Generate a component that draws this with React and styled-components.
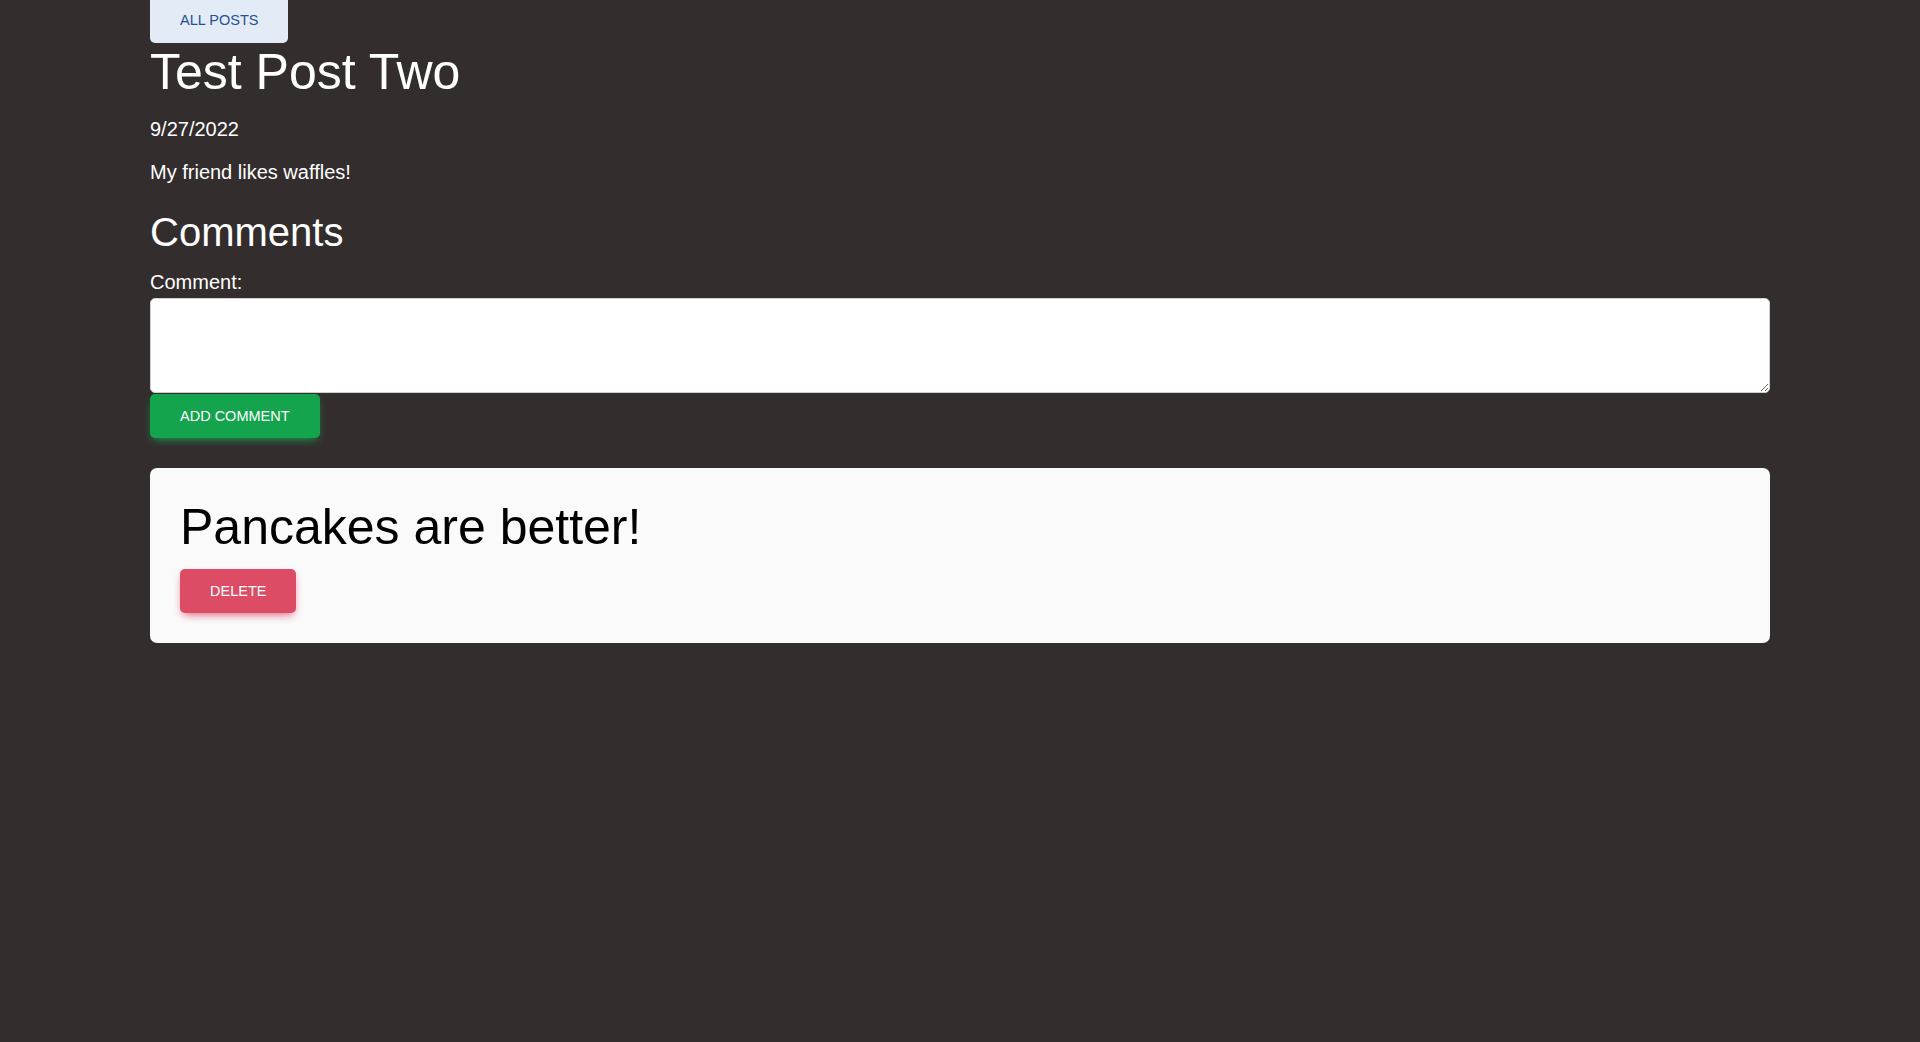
import React from 'react';
import styled, { createGlobalStyle } from 'styled-components';

const GlobalStyle = createGlobalStyle`
  html, body {
    margin: 0;
    padding: 0;
    background: #332d2d;
  }

  body {
    font-family: "Liberation Sans", Arial, sans-serif;
    color: #ffffff;
  }
`;

const Page = styled.main`
  width: 1620px;
  margin: 0 auto;
  display: flex;
  flex-direction: column;
  align-items: flex-start;
`;

const Button = styled.button`
  height: 44px;
  padding: 0 30px;
  border: none;
  border-radius: 5px;
  font-family: "Liberation Sans", Arial, sans-serif;
  font-size: 14.5px;
  text-transform: uppercase;
  cursor: pointer;
  color: ${props => props.$color || '#ffffff'};
  background-color: ${props => props.$bg};
  box-shadow: ${props => props.$glow ? `0 4px 10px -3px ${props.$bg}` : 'none'};
`;

const BackButton = styled(Button)`
  height: 47px;
  margin-top: -4px;
`;

const Title = styled.h1`
  margin: 0;
  font-size: 50px;
  font-weight: 400;
  line-height: normal;
`;

const Text = styled.p`
  margin: ${props => props.$gap || '17.5px'} 0 0;
  font-size: 20px;
  line-height: normal;
`;

const SubTitle = styled.h2`
  margin: 26px 0 0;
  font-size: 40px;
  font-weight: 400;
  line-height: normal;
`;

const CommentForm = styled.form`
  align-self: stretch;
  display: flex;
  flex-direction: column;
  align-items: flex-start;
  margin-top: 16px;
`;

const Label = styled.label`
  font-size: 20px;
  line-height: normal;
`;

const TextArea = styled.textarea`
  box-sizing: border-box;
  align-self: stretch;
  height: 95px;
  margin: 4px 0 1px;
  border: 1px solid #d0d0d0;
  border-radius: 5px;
  background: #ffffff;
  font-family: "Liberation Sans", Arial, sans-serif;
  font-size: 20px;
`;

const CommentCard = styled.section`
  box-sizing: border-box;
  align-self: stretch;
  margin-top: 30px;
  padding: 30px;
  background: #fafafa;
  border-radius: 7px;
  color: #000000;
`;

const CommentText = styled.h3`
  margin: 0 0 13px;
  font-size: 50px;
  font-weight: 400;
  line-height: normal;
`;

const post = {
  title: 'Test Post Two',
  date: '9/27/2022',
  body: 'My friend likes waffles!',
};

const comments = ['Pancakes are better!'];

export default function App() {
  return (
    <>
      <GlobalStyle />
      <Page>
        <BackButton $bg="#e3ebf7" $color="#285192">All Posts</BackButton>
        <Title>{post.title}</Title>
        <Text $gap="17px">{post.date}</Text>
        <Text $gap="19.5px">{post.body}</Text>
        <SubTitle>Comments</SubTitle>
        <CommentForm onSubmit={e => e.preventDefault()}>
          <Label htmlFor="comment">Comment:</Label>
          <TextArea id="comment" />
          <Button type="submit" $bg="#14a44d" $glow>Add Comment</Button>
        </CommentForm>
        {comments.map((c, i) =>
          <CommentCard key={i}>
            <CommentText>{c}</CommentText>
            <Button $bg="#dc4c64" $glow>Delete</Button>
          </CommentCard>
        )}
      </Page>
    </>
  );
}
